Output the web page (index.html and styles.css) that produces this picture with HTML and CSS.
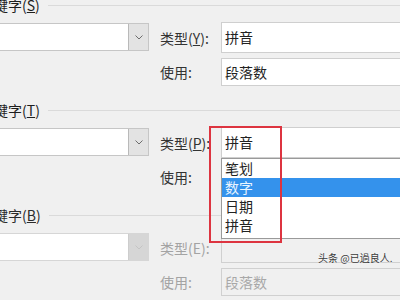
FILE: index.html
```html
<!DOCTYPE html>
<html lang="zh-CN">
<head>
  <meta charset="UTF-8">
  <title>排序</title>
  <link rel="stylesheet" href="styles.css">
</head>
<body>
  <div class="dialog">
    <section class="group">
      <div class="group-head"><span>主要关键字(<u>S</u>)</span><i class="rule"></i></div>
      <div class="group-body">
        <div class="combo">
          <span class="combo-value"></span>
          <span class="combo-btn"><svg width="8" height="5" viewBox="0 0 8 5"><path d="M0.5 0.5 L4 4 L7.5 0.5" fill="none" stroke="#6d6d6d" stroke-width="1"/></svg></span>
        </div>
        <div class="fields">
          <div class="field"><label>类型(<u>Y</u>):</label><div class="box tall">拼音</div></div>
          <div class="field"><label>使用:</label><div class="box">段落数</div></div>
        </div>
      </div>
    </section>

    <section class="group">
      <div class="group-head"><span>次要关键字(<u>T</u>)</span><i class="rule"></i></div>
      <div class="group-body">
        <div class="combo">
          <span class="combo-value"></span>
          <span class="combo-btn"><svg width="8" height="5" viewBox="0 0 8 5"><path d="M0.5 0.5 L4 4 L7.5 0.5" fill="none" stroke="#6d6d6d" stroke-width="1"/></svg></span>
        </div>
        <div class="fields">
          <div class="field"><label>类型(<u>P</u>):</label>
            <div class="box tall open">拼音
              <ul class="options">
                <li>笔划</li>
                <li class="selected">数字</li>
                <li>日期</li>
                <li>拼音</li>
              </ul>
              <span class="mark"></span>
            </div>
          </div>
          <div class="field"><label>使用:</label><div class="box">段落数</div></div>
        </div>
      </div>
    </section>

    <section class="group disabled">
      <div class="group-head"><span>第三关键字(<u>B</u>)</span><i class="rule"></i></div>
      <div class="group-body">
        <div class="combo">
          <span class="combo-value"></span>
          <span class="combo-btn"><svg width="8" height="5" viewBox="0 0 8 5"><path d="M0.5 0.5 L4 4 L7.5 0.5" fill="none" stroke="#c4c4c4" stroke-width="1"/></svg></span>
        </div>
        <div class="fields">
          <div class="field"><label>类型(E):</label><div class="box tall"></div></div>
          <div class="field"><label>使用:</label><div class="box">段落数</div></div>
        </div>
      </div>
    </section>
  </div>

  <div class="watermark">头条 @已過良人.</div>
</body>
</html>
```

FILE: styles.css
```css
body {
  margin: 0;
  width: 400px;
  height: 300px;
  overflow: hidden;
  position: relative;
  background: #f0f0f0;
  font-family: "Noto Sans CJK SC", "Noto Sans", sans-serif;
  font-size: 14px;
  color: #2b2b2b;
}
.dialog {
  margin: -3px 0 0 -60px;
  width: 520px;
}
.group { margin-bottom: 16px; }
.group-head {
  display: flex;
  align-items: center;
  height: 16px;
  line-height: 16px;
  padding-left: 12px;
  color: #1e1e1e;
}
.group-head .rule {
  flex: 1;
  height: 1px;
  margin-left: 8px;
  background: #dadada;
}
.group-body {
  display: flex;
  align-items: flex-start;
  margin-top: 9px;
}
.combo {
  display: flex;
  width: 209px;
  height: 28px;
  margin-top: 1px;
  margin-right: 11px;
  box-sizing: border-box;
  border: 1px solid #c6c6c6;
  background: #fff;
}
.combo-value { flex: 1; }
.combo-btn {
  width: 19px;
  display: flex;
  align-items: center;
  justify-content: center;
  background: #e3e3e3;
  border-left: 1px solid #b9b9b9;
}
.fields {
  display: flex;
  flex-direction: column;
  gap: 5px;
}
.field {
  display: flex;
  align-items: center;
}
.field label {
  width: 61px;
  color: #333;
}
.box {
  width: 200px;
  height: 28px;
  box-sizing: border-box;
  border: 1px solid #cfcfcf;
  background: #fff;
  padding-left: 3px;
  line-height: 26px;
  color: #222;
}
.box.tall {
  height: 31px;
  line-height: 29px;
}
.box.open { position: relative; }
.options {
  position: absolute;
  top: 30px;
  left: -1px;
  width: 200px;
  margin: 0;
  padding: 0 0 3px;
  list-style: none;
  background: #fff;
  border: 1px solid #9a9a9a;
  z-index: 2;
}
.options li {
  height: 19px;
  line-height: 19px;
  padding-left: 3px;
  color: #222;
}
.options li.selected {
  background: #3492ec;
  color: #e9f4ff;
}
.mark {
  position: absolute;
  left: -13px;
  top: -2px;
  width: 69px;
  height: 113px;
  border: 2px solid #dd3440;
  z-index: 3;
}
.disabled .group-head { color: #2b2b2b; }
.disabled .combo { border-color: #d6d6d6; }
.disabled .combo-btn {
  background: #d6d6d6;
  border-left-color: #cdcdcd;
}
.disabled .field label { color: #a3a3a3; }
.disabled .box {
  background: #f0f0f0;
  border-color: #d0d0d0;
  color: #a8a8a8;
}
.watermark {
  position: absolute;
  left: 318px;
  top: 251px;
  font-size: 10px;
  line-height: 14px;
  color: #3a3a3a;
  text-shadow: 0 0 2px #fff;
}
```
